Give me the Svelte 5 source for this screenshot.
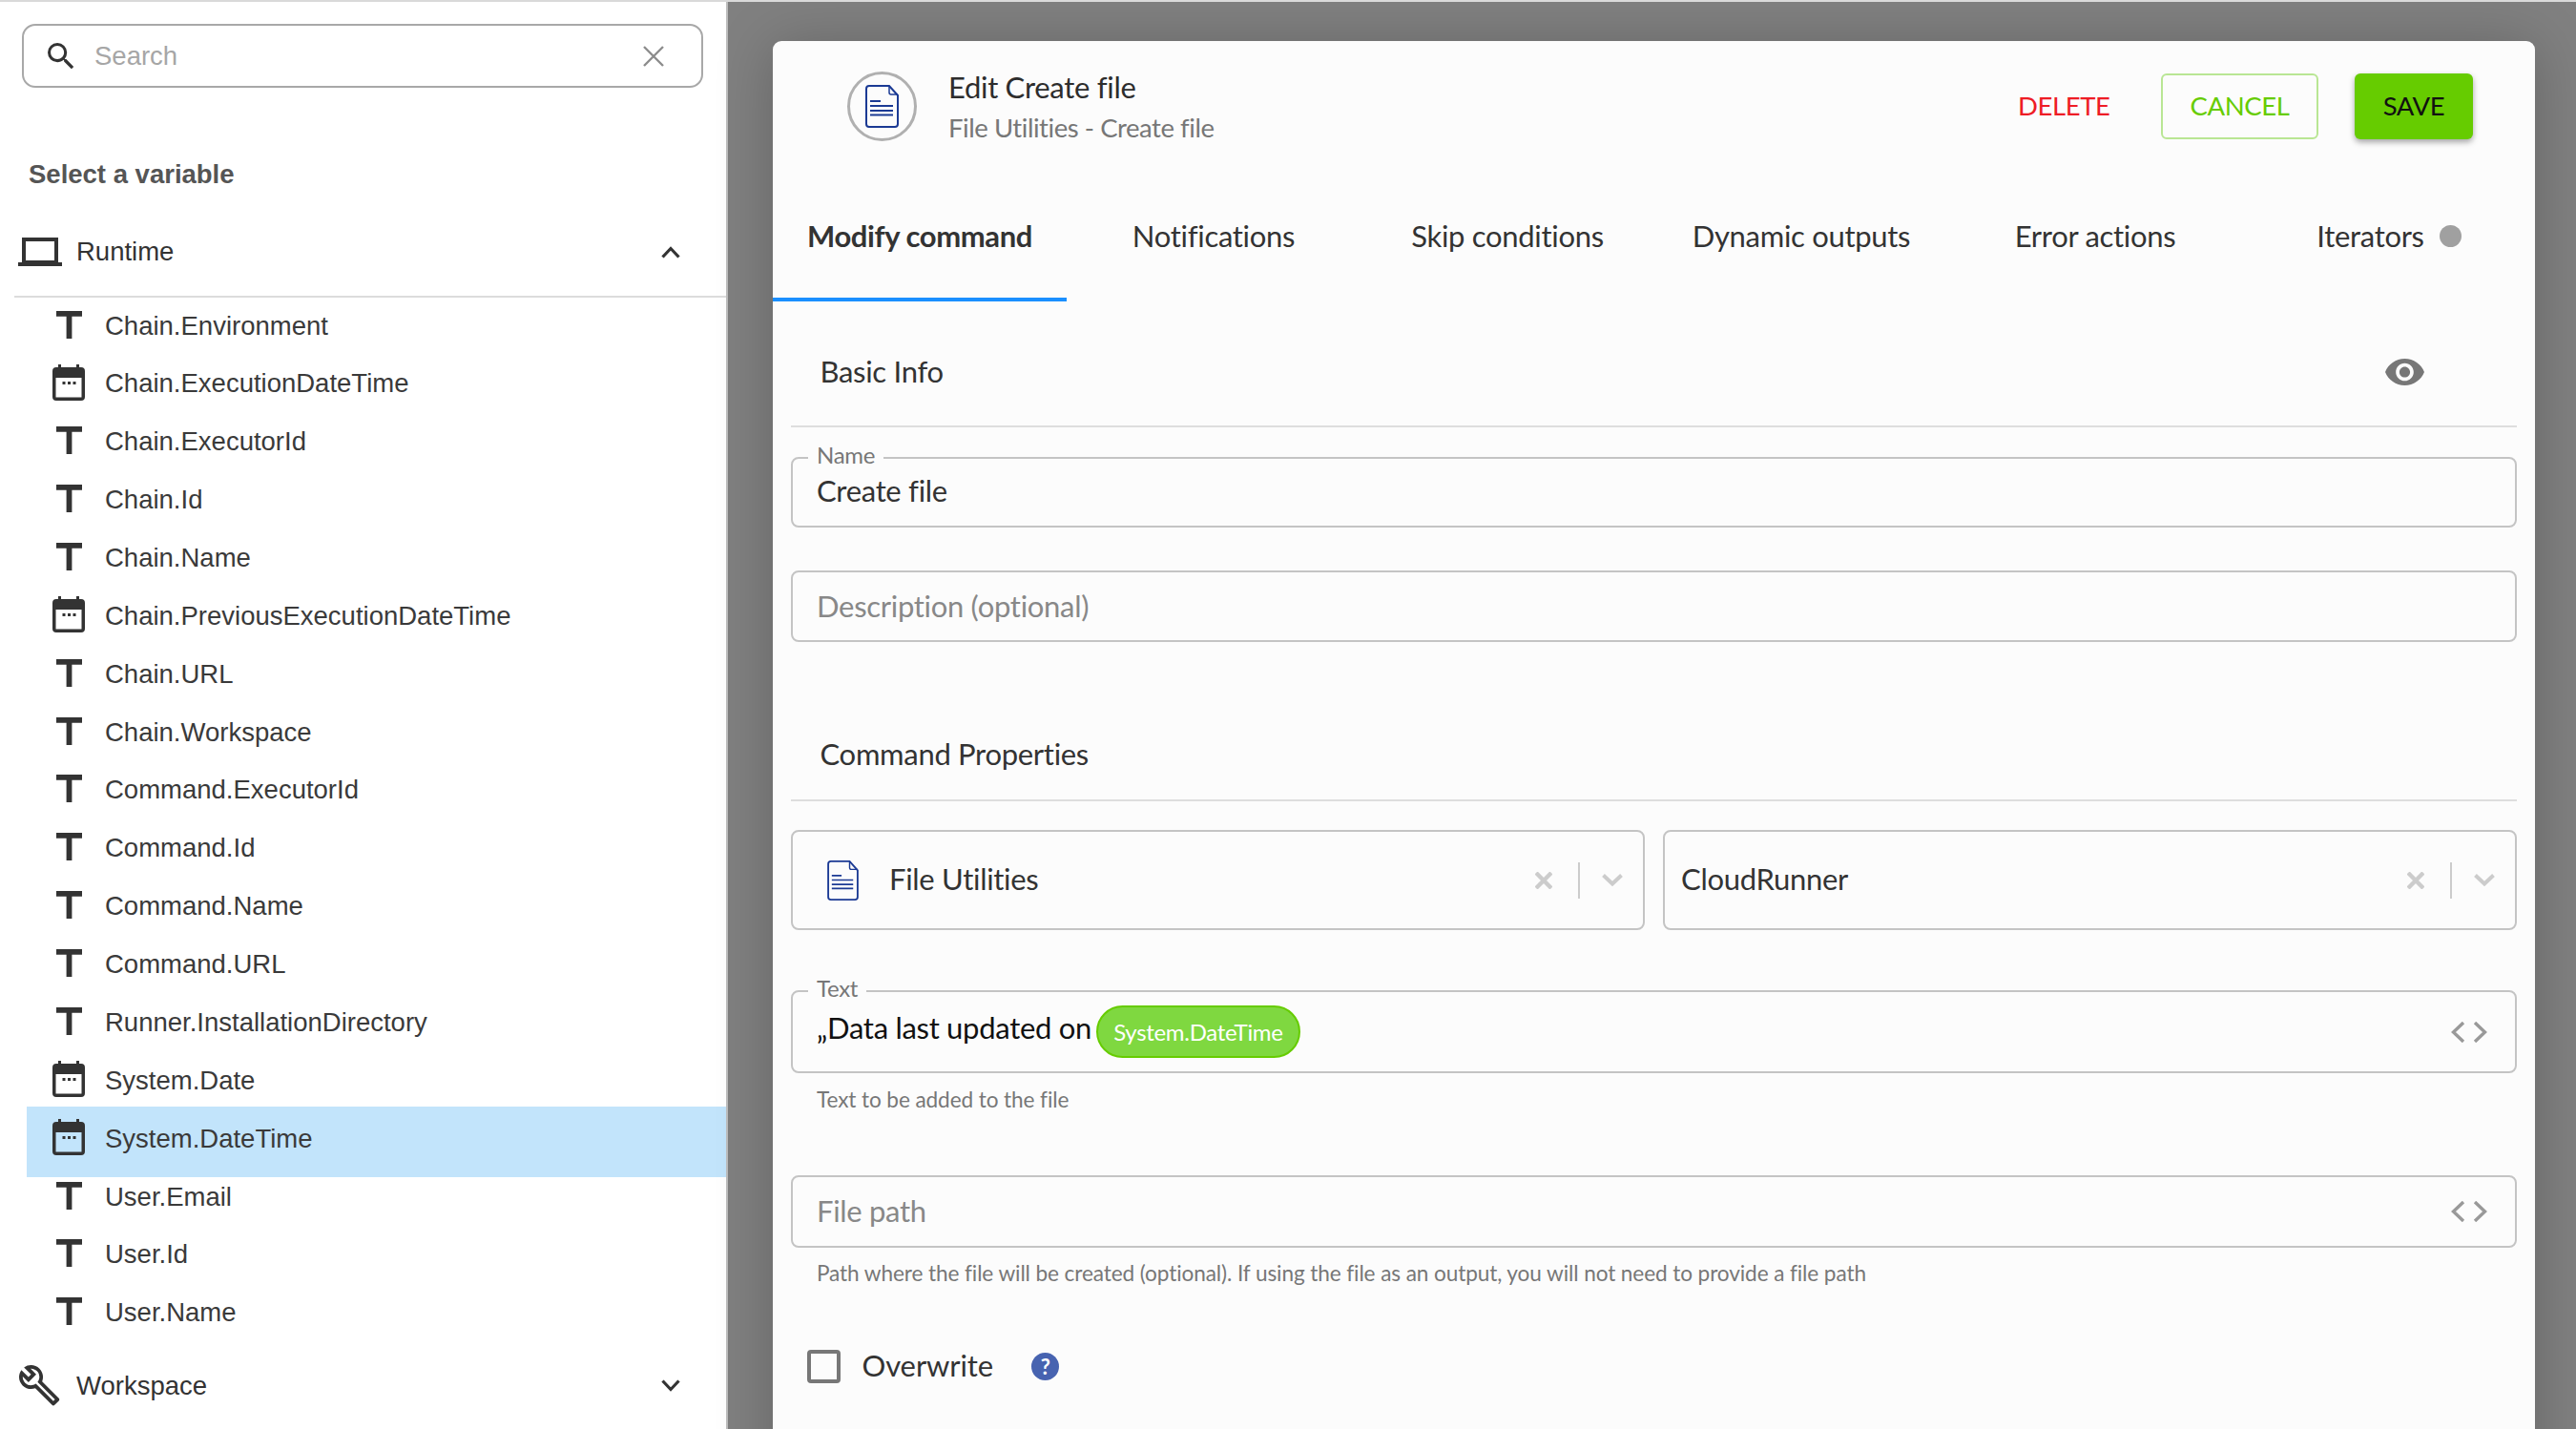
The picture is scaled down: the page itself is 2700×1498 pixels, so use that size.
<script lang="ts">
  interface Variable {
    name: string;
    kind: "text" | "date";
    selected?: boolean;
  }

  const variables: Variable[] = [
    { name: "Chain.Environment", kind: "text" },
    { name: "Chain.ExecutionDateTime", kind: "date" },
    { name: "Chain.ExecutorId", kind: "text" },
    { name: "Chain.Id", kind: "text" },
    { name: "Chain.Name", kind: "text" },
    { name: "Chain.PreviousExecutionDateTime", kind: "date" },
    { name: "Chain.URL", kind: "text" },
    { name: "Chain.Workspace", kind: "text" },
    { name: "Command.ExecutorId", kind: "text" },
    { name: "Command.Id", kind: "text" },
    { name: "Command.Name", kind: "text" },
    { name: "Command.URL", kind: "text" },
    { name: "Runner.InstallationDirectory", kind: "text" },
    { name: "System.Date", kind: "date" },
    { name: "System.DateTime", kind: "date", selected: true },
    { name: "User.Email", kind: "text" },
    { name: "User.Id", kind: "text" },
    { name: "User.Name", kind: "text" }
  ];

  const tabs = ["Modify command", "Notifications", "Skip conditions", "Dynamic outputs", "Error actions", "Iterators"];
</script>

{#snippet docIcon(cls: string)}
  <svg class={cls} viewBox="0 0 35 45" fill="none" stroke="#1b3a94" stroke-width="2">
    <path d="M4 1h21l9 10v30a3 3 0 0 1-3 3H4a3 3 0 0 1-3-3V4a3 3 0 0 1 3-3z" />
    <path d="M25 1v7a2 2 0 0 0 2 2h7" stroke-width="1.5" />
    <path d="M5 17h11M5 22h24M5 27h24M5 31.500h24" stroke-width="1.800" />
  </svg>
{/snippet}

{#snippet codeIcon()}
  <svg class="code" viewBox="0 0 38 22" fill="none" stroke="#999" stroke-width="3.400">
    <path d="M13 1 2.500 11 13 21M25 1l10.500 10L25 21" />
  </svg>
{/snippet}

{#snippet selectActions()}
  <svg class="sel-x" viewBox="0 0 18 18" fill="none" stroke="#ccc" stroke-width="4.400">
    <path d="M1 1l16 16M17 1 1 17" />
  </svg>
  <span class="sel-sep"></span>
  <svg class="sel-chev" viewBox="0 0 22 13" fill="none" stroke="#ccc" stroke-width="4">
    <path d="M1.500 1.500 11 10.500l9.500-9" />
  </svg>
{/snippet}

<div class="page">
  <aside class="side">
    <div class="search">
      <svg class="search-ic" viewBox="3 3 18 18" fill="#333">
        <path d="M15.500 14h-.79l-.28-.27A6.470 6.470 0 0 0 16 9.500 6.500 6.500 0 1 0 9.500 16c1.610 0 3.090-.59 4.230-1.570l.27.28v.79l5 4.990L20.490 19l-4.990-5zm-6 0C7.010 14 5 11.990 5 9.500S7.010 5 9.500 5 14 7.010 14 9.500 11.990 14 9.500 14z" />
      </svg>
      <span class="search-text">Search</span>
      <svg class="search-x" viewBox="0 0 22 22" fill="none" stroke="#8c8c8c" stroke-width="2.400">
        <path d="M1 1l20 20M21 1 1 21" />
      </svg>
    </div>

    <h3 class="select-title">Select a variable</h3>

    <div class="group open">
      <svg class="laptop" viewBox="0 0 46 30" fill="none" stroke="#333">
        <path d="M6 2h34v24H6z" stroke-width="4" />
        <path d="M0 28h46" stroke-width="4" />
      </svg>
      <span>Runtime</span>
      <svg class="chev" viewBox="0 0 20 13" fill="none" stroke="#333" stroke-width="3.200">
        <path d="M1.500 11.500 10 2.500l8.500 9" />
      </svg>
    </div>

    <ul class="vars">
      {#each variables as v (v.name)}
        <li class="var" class:selected={v.selected}>
          <span class="var-ic">
            {#if v.kind === "text"}
              <svg class="ic-t" viewBox="5 4 14 15" fill="#333"><path d="M5 4v3h5.500v12h3V7H19V4z" /></svg>
            {:else}
              <svg class="ic-cal" viewBox="0 0 34 38" fill="#333" fill-rule="evenodd">
                <path d="M6 0h3v3h16V0h3v3h2a4 4 0 0 1 4 4v27a4 4 0 0 1-4 4H4a4 4 0 0 1-4-4V7a4 4 0 0 1 4-4h2zM3.500 14v20.500h27V14z" />
                <path d="M10.500 18h3v3h-3zM16 18h3v3h-3zM21.500 18h3v3h-3z" />
              </svg>
            {/if}
          </span>
          <span>{v.name}</span>
        </li>
      {/each}
    </ul>

    <div class="group closed">
      <svg class="wrench" viewBox="1 1 22.300 22.300" fill="#333">
        <path d="M22.610 18.970 13.540 9.900c.93-2.340.45-5.100-1.440-7C9.800.6 6.220.39 3.670 2.270L7.500 6.100 6.090 7.510 2.270 3.690C.39 6.230.6 9.810 2.910 12.100c1.860 1.860 4.570 2.350 6.890 1.480l9.110 9.110c.39.39 1.020.39 1.410 0l2.300-2.300c.4-.38.4-1.020-.01-1.420zm-3 1.600-9.460-9.460c-.61.45-1.290.72-2 .82-1.360.2-2.790-.21-3.830-1.250C3.370 9.730 2.930 8.460 3 7.200l3.090 3.090 4.240-4.240-3.090-3.090c1.260-.07 2.520.37 3.480 1.320 1.080 1.080 1.490 2.570 1.240 3.960-.13.71-.43 1.370-.9 1.960l9.440 9.440-.89.92z" />
      </svg>
      <span>Workspace</span>
      <svg class="chev" viewBox="0 0 20 13" fill="none" stroke="#333" stroke-width="3.200">
        <path d="M1.500 1.500 10 10.500l8.500-9" />
      </svg>
    </div>
  </aside>

  <main class="overlay">
    <section class="modal">
      <header class="head">
        <div class="head-ic">
          {@render docIcon("doc-lg")}
        </div>
        <div class="head-text">
          <div class="title">Edit Create file</div>
          <div class="subtitle">File Utilities - Create file</div>
        </div>
        <button class="btn-delete">DELETE</button>
        <button class="btn-cancel">CANCEL</button>
        <button class="btn-save">SAVE</button>
      </header>

      <nav class="tabs">
        {#each tabs as tab, i}
          <div class="tab" class:active={i === 0}>
            {tab}
            {#if tab === "Iterators"}<span class="dot"></span>{/if}
          </div>
        {/each}
      </nav>

      <div class="form">
        <div class="section first">
          <span>Basic Info</span>
          <svg class="eye" viewBox="1 4.500 22 15" fill="#777">
            <path d="M12 4.500C7 4.500 2.730 7.610 1 12c1.730 4.390 6 7.500 11 7.500s9.270-3.110 11-7.500c-1.730-4.390-6-7.500-11-7.500zM12 17c-2.760 0-5-2.240-5-5s2.240-5 5-5 5 2.240 5 5-2.240 5-5 5zm0-8c-1.660 0-3 1.340-3 3s1.340 3 3 3 3-1.340 3-3-1.340-3-3-3z" />
          </svg>
        </div>

        <div class="field name">
          <span class="legend">Name</span>
          <span class="value">Create file</span>
        </div>
        <div class="field desc">
          <span class="placeholder">Description (optional)</span>
        </div>

        <div class="section second"><span>Command Properties</span></div>

        <div class="selects">
          <div class="field select">
            {@render docIcon("doc-sm")}
            <span class="value util">File Utilities</span>
            {@render selectActions()}
          </div>
          <div class="field select">
            <span class="value">CloudRunner</span>
            {@render selectActions()}
          </div>
        </div>

        <div class="field text-field">
          <span class="legend">Text</span>
          <span class="value dark">„Data last updated on</span>
          <span class="chip">System.DateTime</span>
          {@render codeIcon()}
        </div>
        <p class="helper helper-text">Text to be added to the file</p>

        <div class="field path">
          <span class="placeholder">File path</span>
          {@render codeIcon()}
        </div>
        <p class="helper helper-path">Path where the file will be created (optional). If using the file as an output, you will not need to provide a file path</p>

        <div class="overwrite">
          <span class="check"></span>
          <span class="over-label">Overwrite</span>
          <span class="help">?</span>
        </div>
      </div>
    </section>
  </main>
</div>

<style>
  :global(body) {
    margin: 0;
    background: #fff;
  }
  .page {
    display: flex;
    width: 2700px;
    height: 1498px;
    box-sizing: border-box;
    border-top: 2px solid #d9d9d9;
    overflow: hidden;
  }

  /* left variable picker */
  .side {
    width: 763px;
    flex-shrink: 0;
    box-sizing: border-box;
    border-right: 2px solid #bdbdbd;
    background: #fff;
    font-family: "Liberation Sans", Arial, sans-serif;
    font-size: 27.500px;
    color: #333;
  }
  .search {
    display: flex;
    align-items: center;
    box-sizing: border-box;
    height: 67px;
    margin: 23px 24px 0 23px;
    padding: 0 39px 0 25px;
    border: 2px solid #a8a8a8;
    border-radius: 14px;
  }
  .search-ic {
    width: 28px;
    height: 28px;
    flex-shrink: 0;
  }
  .search-text {
    margin-left: 21px;
    flex: 1;
    color: #a6a6a6;
  }
  .search-x {
    width: 22px;
    height: 22px;
  }
  .select-title {
    margin: 71px 0 0 30px;
    font-size: 27.500px;
    line-height: 40px;
    font-weight: 700;
    color: #555;
  }
  .group {
    display: flex;
    align-items: center;
    position: relative;
    height: 40px;
    margin-left: 15px;
    padding-right: 48px;
  }
  .group.open {
    padding-top: 41px;
    padding-bottom: 26px;
    border-bottom: 2px solid #dcdcdc;
  }
  .group.closed {
    margin-top: 26px;
    padding-bottom: 25px;
    border-bottom: 2px solid #dcdcdc;
  }
  .group span {
    flex: 1;
    margin-left: 15px;
  }
  .laptop {
    width: 46px;
    height: 30px;
    margin-left: 4px;
    flex-shrink: 0;
  }
  .wrench {
    width: 43px;
    height: 43px;
    margin-left: 5px;
    margin-right: 2px;
    flex-shrink: 0;
  }
  .chev {
    width: 20px;
    height: 13px;
  }
  .vars {
    list-style: none;
    margin: -0.900px 0 0 28px;
    padding: 0;
  }
  .var {
    display: flex;
    align-items: center;
    box-sizing: border-box;
    height: 60.860px;
    padding-left: 27px;
    color: #3a3a3a;
  }
  .var.selected {
    height: 74px;
    margin: -3px 0 -10px;
    padding-top: 3px;
    padding-bottom: 10px;
    background: #c2e4fb;
  }
  .var-ic {
    display: flex;
    justify-content: center;
    width: 34px;
    margin-right: 21px;
    margin-bottom: 3px;
  }
  .ic-t {
    width: 27px;
    height: 29px;
  }
  .ic-cal {
    width: 34px;
    height: 38px;
  }

  /* dimmed area and modal */
  .overlay {
    flex: 1;
    min-width: 0;
    background: #808080;
    padding: 41px 0 0 47px;
  }
  .modal {
    width: 1847px;
    height: 1600px;
    background: #fcfcfc;
    border-radius: 9px;
    box-shadow: 0 4px 60px rgba(0, 0, 0, 0.22);
    font-family: Lato, "Liberation Sans", sans-serif;
    letter-spacing: -0.300px;
    color: #333;
  }
  .head {
    display: flex;
    align-items: center;
    box-sizing: border-box;
    height: 137px;
    padding: 0 65px 0 78px;
  }
  .head-ic {
    display: flex;
    align-items: center;
    justify-content: center;
    box-sizing: border-box;
    width: 73px;
    height: 73px;
    border: 3px solid #b0b0b0;
    border-radius: 50%;
    flex-shrink: 0;
  }
  :global(.doc-lg) {
    width: 35px;
    height: 45px;
  }
  .head-text {
    flex: 1;
    margin-left: 33px;
  }
  .title {
    font-size: 31px;
    line-height: 38px;
    color: #2d2d2d;
  }
  .subtitle {
    margin-top: 6px;
    font-size: 27.500px;
    line-height: 36px;
    letter-spacing: -0.450px;
    color: #777;
  }
  button {
    font-family: inherit;
    font-size: 27.500px;
    letter-spacing: -0.400px;
    height: 69px;
    box-sizing: border-box;
    border-radius: 6px;
    padding: 0 0 3px;
    background: none;
    border: none;
    flex-shrink: 0;
  }
  .btn-delete {
    width: 94px;
    margin-right: 56px;
    color: #ee1c25;
  }
  .btn-cancel {
    width: 165px;
    margin-right: 38px;
    border: 2px solid #b9e694;
    color: #66cc00;
  }
  .btn-save {
    width: 124px;
    background: #66cc00;
    color: #111;
    box-shadow: 0 3px 6px rgba(0, 0, 0, 0.35);
  }
  .tabs {
    display: grid;
    grid-template-columns: repeat(6, 308px);
    height: 136px;
  }
  .tab {
    display: flex;
    align-items: center;
    justify-content: center;
    box-sizing: border-box;
    padding-bottom: 2px;
    font-size: 31px;
    color: #333;
  }
  .tab.active {
    font-weight: 700;
    padding: 1px 0 0;
    border-bottom: 4px solid #1a8fff;
    letter-spacing: -0.400px;
  }
  .dot {
    width: 23px;
    height: 23px;
    margin-left: 16px;
    border-radius: 50%;
    background: #a0a0a0;
  }

  .form {
    padding: 0 19px;
  }
  .section {
    display: flex;
    align-items: center;
    justify-content: space-between;
    box-sizing: border-box;
    border-bottom: 2px solid #dedede;
    padding-left: 30.500px;
    font-size: 31px;
    color: #333;
  }
  .section span {
    margin-bottom: 3px;
  }
  .section.first span {
    margin-bottom: 1px;
  }
  .section.first {
    height: 132px;
    padding-top: 17px;
    padding-right: 97px;
  }
  .section.second {
    height: 167px;
    padding-top: 71px;
  }
  .eye {
    width: 41px;
    height: 28px;
  }
  .field {
    display: flex;
    align-items: center;
    position: relative;
    box-sizing: border-box;
    border: 2px solid #c4c4c4;
    border-radius: 8px;
    padding: 0 25px;
    font-size: 31px;
  }
  .legend {
    position: absolute;
    top: -17px;
    left: 16px;
    padding: 0 9px;
    background: #fcfcfc;
    font-size: 24px;
    line-height: 26px;
    color: #777;
  }
  .value {
    margin-bottom: 4px;
    color: #333;
  }
  .value.dark {
    margin-bottom: 10px;
    color: #111;
  }
  .placeholder {
    margin-bottom: 2px;
    color: #888;
  }
  .name {
    height: 74px;
    margin-top: 31px;
  }
  .desc {
    height: 75px;
    margin-top: 45px;
  }
  .selects {
    display: grid;
    grid-template-columns: 895px 895px;
    column-gap: 19px;
    margin-top: 30px;
  }
  .select {
    height: 105px;
    padding: 0 21px 0 17px;
  }
  .select .value {
    flex: 1;
  }
  :global(.doc-sm) {
    width: 33px;
    height: 42px;
    margin-left: 18.500px;
    flex-shrink: 0;
  }
  .value.util {
    margin-left: 32.500px;
  }
  .sel-x {
    width: 18px;
    height: 18px;
  }
  .sel-sep {
    width: 2px;
    height: 38px;
    margin: 0 23px 0 27px;
    background: #ccc;
  }
  .sel-chev {
    width: 22px;
    height: 13px;
  }
  .text-field {
    height: 87px;
    margin-top: 63px;
  }
  .chip {
    box-sizing: border-box;
    display: flex;
    align-items: center;
    justify-content: center;
    width: 214px;
    height: 55px;
    margin-left: 5px;
    border: 2px solid #66cc00;
    border-radius: 28px;
    background: #7fd840;
    color: #fff;
    font-size: 24px;
  }
  .code {
    width: 38px;
    height: 22px;
    margin-left: auto;
    margin-right: 4px;
    flex-shrink: 0;
  }
  .helper {
    margin: 0 0 0 27px;
    font-size: 22.600px;
    line-height: 28px;
    letter-spacing: -0.100px;
    color: #777;
  }
  .helper-text {
    margin-top: 14px;
  }
  .path {
    height: 76px;
    margin-top: 65px;
  }
  .helper-path {
    margin-top: 13px;
  }
  .overwrite {
    display: flex;
    align-items: center;
    height: 36px;
    margin: 65px 0 0 17px;
  }
  .check {
    box-sizing: border-box;
    width: 35px;
    height: 35px;
    border: 4px solid #777;
    border-radius: 4px;
  }
  .over-label {
    margin-left: 22.500px;
    margin-bottom: 2px;
    font-size: 31px;
    letter-spacing: -0.100px;
    color: #333;
  }
  .help {
    display: flex;
    align-items: center;
    justify-content: center;
    width: 29px;
    height: 29px;
    margin-left: 40px;
    border-radius: 50%;
    background: #4763b0;
    color: #fff;
    font-size: 22px;
    font-weight: 700;
  }
</style>
